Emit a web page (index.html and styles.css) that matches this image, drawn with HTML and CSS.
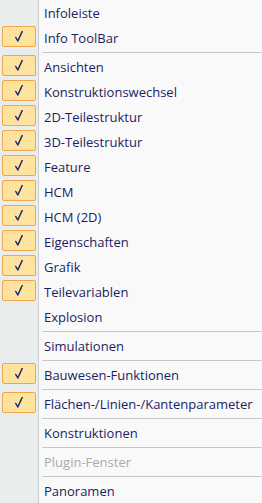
FILE: index.html
```html
<!DOCTYPE html>
<html lang="de">
<head>
    <meta charset="UTF-8">
    <meta name="viewport" content="width=device-width, initial-scale=1.0">
    <title>Menü</title>
    <link rel="stylesheet" href="styles.css">
</head>
<body>
    <div class="menu">
        <div class="item"><span class="gutter"></span><span class="label">Infoleiste</span></div>
        <div class="item checked"><span class="gutter"><span class="check"><svg width="8" height="11" viewBox="0 0 8 11"><polyline points="0.8,6.5 2.8,10 7.2,0.5"/></svg></span></span><span class="label">Info ToolBar</span></div>
        <div class="sep"><span class="gutter"></span><span class="line"></span></div>
        <div class="item"><span class="gutter"><span class="check"><svg width="8" height="11" viewBox="0 0 8 11"><polyline points="0.8,6.5 2.8,10 7.2,0.5"/></svg></span></span><span class="label">Ansichten</span></div>
        <div class="item"><span class="gutter"><span class="check"><svg width="8" height="11" viewBox="0 0 8 11"><polyline points="0.8,6.5 2.8,10 7.2,0.5"/></svg></span></span><span class="label">Konstruktionswechsel</span></div>
        <div class="item"><span class="gutter"><span class="check"><svg width="8" height="11" viewBox="0 0 8 11"><polyline points="0.8,6.5 2.8,10 7.2,0.5"/></svg></span></span><span class="label">2D-Teilestruktur</span></div>
        <div class="item"><span class="gutter"><span class="check"><svg width="8" height="11" viewBox="0 0 8 11"><polyline points="0.8,6.5 2.8,10 7.2,0.5"/></svg></span></span><span class="label">3D-Teilestruktur</span></div>
        <div class="item"><span class="gutter"><span class="check"><svg width="8" height="11" viewBox="0 0 8 11"><polyline points="0.8,6.5 2.8,10 7.2,0.5"/></svg></span></span><span class="label">Feature</span></div>
        <div class="item"><span class="gutter"><span class="check"><svg width="8" height="11" viewBox="0 0 8 11"><polyline points="0.8,6.5 2.8,10 7.2,0.5"/></svg></span></span><span class="label">HCM</span></div>
        <div class="item"><span class="gutter"><span class="check"><svg width="8" height="11" viewBox="0 0 8 11"><polyline points="0.8,6.5 2.8,10 7.2,0.5"/></svg></span></span><span class="label">HCM (2D)</span></div>
        <div class="item"><span class="gutter"><span class="check"><svg width="8" height="11" viewBox="0 0 8 11"><polyline points="0.8,6.5 2.8,10 7.2,0.5"/></svg></span></span><span class="label">Eigenschaften</span></div>
        <div class="item"><span class="gutter"><span class="check"><svg width="8" height="11" viewBox="0 0 8 11"><polyline points="0.8,6.5 2.8,10 7.2,0.5"/></svg></span></span><span class="label">Grafik</span></div>
        <div class="item"><span class="gutter"><span class="check"><svg width="8" height="11" viewBox="0 0 8 11"><polyline points="0.8,6.5 2.8,10 7.2,0.5"/></svg></span></span><span class="label">Teilevariablen</span></div>
        <div class="item"><span class="gutter"></span><span class="label">Explosion</span></div>
        <div class="sep"><span class="gutter"></span><span class="line"></span></div>
        <div class="item"><span class="gutter"></span><span class="label">Simulationen</span></div>
        <div class="sep"><span class="gutter"></span><span class="line"></span></div>
        <div class="item"><span class="gutter"><span class="check"><svg width="8" height="11" viewBox="0 0 8 11"><polyline points="0.8,6.5 2.8,10 7.2,0.5"/></svg></span></span><span class="label">Bauwesen-Funktionen</span></div>
        <div class="sep"><span class="gutter"></span><span class="line"></span></div>
        <div class="item"><span class="gutter"><span class="check"><svg width="8" height="11" viewBox="0 0 8 11"><polyline points="0.8,6.5 2.8,10 7.2,0.5"/></svg></span></span><span class="label">Flächen-/Linien-/Kantenparameter</span></div>
        <div class="sep"><span class="gutter"></span><span class="line"></span></div>
        <div class="item"><span class="gutter"></span><span class="label">Konstruktionen</span></div>
        <div class="sep"><span class="gutter"></span><span class="line"></span></div>
        <div class="item disabled"><span class="gutter"></span><span class="label">Plugin-Fenster</span></div>
        <div class="sep"><span class="gutter"></span><span class="line"></span></div>
        <div class="item"><span class="gutter"></span><span class="label">Panoramen</span></div>
    </div>
</body>
</html>
```

FILE: styles.css
```css
body {
    margin: 0;
    font-family: "Open Sans", "Noto Sans", sans-serif;
    font-size: 13px;
    background: #f9f9f9;
}
.menu {
    width: 262px;
    height: 503px;
    background: #f9f9f9;
}
.item, .sep {
    display: flex;
}
.item {
    height: 25px;
}
.sep {
    height: 4px;
}
.gutter {
    width: 39px;
    flex: none;
    box-sizing: border-box;
    background: #e9edee;
    border-right: 1px solid #c9cdce;
}
.check {
    display: flex;
    justify-content: center;
    align-items: center;
    width: 34px;
    height: 21px;
    margin: 1px 0 0 2px;
    box-sizing: border-box;
    background: #fde39d;
    border: 1px solid #f3a54a;
    border-radius: 2px;
}
.check svg {
    fill: none;
    stroke: #1f2468;
    stroke-width: 1.5;
    stroke-linejoin: round;
    stroke-linecap: round;
}
.label {
    padding: 1px 0 0 5px;
    line-height: 25px;
    color: #1b1e64;
    white-space: nowrap;
}
.disabled .label {
    color: #a9a9a9;
}
.line {
    flex: 1;
    margin: 2px 0 0 3px;
    height: 1px;
    background: #c8c8c8;
}
```
